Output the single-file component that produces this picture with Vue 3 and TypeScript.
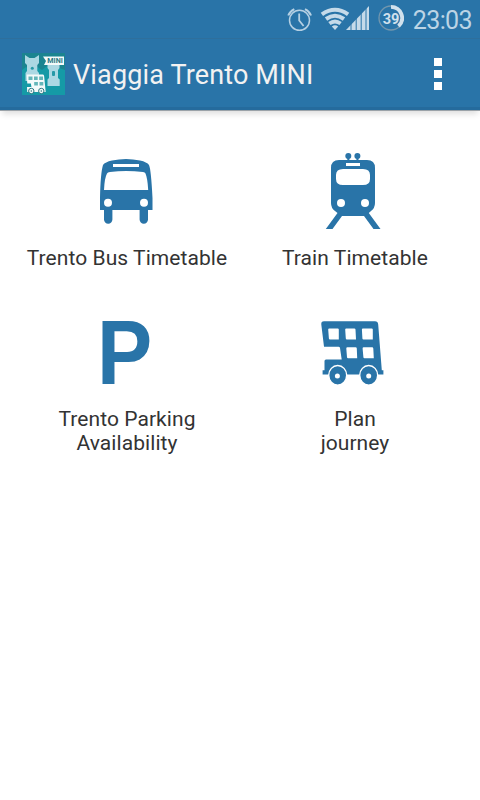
<script setup lang="ts">
interface Tile {
  id: 'bus' | 'train' | 'parking' | 'journey'
  lines: string[]
}

const title = 'Viaggia Trento MINI'
const clock = '23:03'
const battery = 39

const tiles: Tile[] = [
  { id: 'bus', lines: ['Trento Bus Timetable'] },
  { id: 'train', lines: ['Train Timetable'] },
  { id: 'parking', lines: ['Trento Parking', 'Availability'] },
  { id: 'journey', lines: ['Plan', 'journey'] },
]
</script>

<template>
  <div class="screen">
    <div class="status">
      <svg class="status-icons" viewBox="0 0 124 38" aria-hidden="true">
        <!-- alarm -->
        <g fill="none" stroke="#b5d0e3" stroke-width="1.5">
          <circle cx="19.5" cy="20.3" r="10" />
          <path d="M19.2 13.5V20.5L23.6 26" stroke-width="1.8" />
          <path d="M8.3 15.5Q9.8 11.4 14.3 9.2M31 15.5Q29.5 11.4 25 9.2" stroke-width="2" />
        </g>
        <!-- wifi -->
        <g fill="none" stroke="#c5dae9" stroke-width="4">
          <path d="M41.9 14.4Q55 5.2 68.1 14.4" />
          <path d="M46 19Q55 12.6 64 19" />
          <path d="M49.4 23.6Q55 19.4 60.6 23.6" stroke-width="3.8" />
        </g>
        <path d="M51.8 26.4Q55 24.2 58.2 26.4L55 30Z" fill="#c5dae9" />
        <!-- signal -->
        <path d="M66 30L89 6V30Z" fill="#c5dae9" />
        <path d="M71 22V30M76.2 17V30M81.2 12V30M86 7V30" stroke="#2974a8" stroke-width="1" />
        <!-- battery ring -->
        <circle cx="111" cy="18" r="12" fill="none" stroke="#7296ad" stroke-width="1.3" />
        <path d="M111 6.8A11.2 11.2 0 0 1 118.5 26.2" fill="none" stroke="#d0e1ed" stroke-width="3.8" />
        <text class="battery" x="111" y="24" text-anchor="middle">{{ battery }}</text>
      </svg>
      <span class="clock">{{ clock }}</span>
    </div>

    <header class="bar">
      <svg class="logo" viewBox="0 0 43 42" aria-hidden="true">
        <rect width="43" height="42" fill="#1b8490" />
        <path d="M0 17L4 14L8 17L14 13L20 17L25 13L31 18L37 15L43 17V42H0Z" fill="#159aa6" />
        <path d="M3 2L7.5 5H12.5L17 2V10L15.3 12V18L17 20V28H3.5V20L5 18V12L3 10Z" fill="#acd8e3" />
        <circle cx="10.3" cy="15.3" r="1.5" fill="#2799a7" />
        <path d="M25.5 4H37.5V15L36 17V25L37.7 26.5V33H25.5V26.5L27 25V17L25.5 15Z" fill="#acd8e3" />
        <rect x="30" y="18" width="3" height="5" rx="1" fill="#2799a7" />
        <path d="M21 3.5H42V12H22L24 8Z" fill="#f4fafa" />
        <text class="ribbon" x="25.3" y="10.3" textLength="15.5" lengthAdjust="spacingAndGlyphs">MINI</text>
        <path d="M4.6 21.5H21Q22 21.5 22.1 23L23.7 39H5.2L5 34H9.4L8.9 30.5H5.3Z" fill="#f4fafa" />
        <path d="M6.5 23.5H10.5V27H6.5ZM12 23.5H15.7V27H12ZM17.2 23.5H21V27H17.2ZM12.2 29H15.9V32.5H12.2ZM17.5 29H21.3V32.5H17.5Z" fill="#64b6b9" />
        <g fill="#f4fafa" stroke="#2a7882" stroke-width="1">
          <circle cx="9.3" cy="38" r="2.7" />
          <circle cx="19.3" cy="38" r="2.7" />
        </g>
        <circle cx="9.3" cy="38" r=".8" fill="#2a7882" />
        <circle cx="19.3" cy="38" r=".8" fill="#2a7882" />
      </svg>
      <h1 class="title">{{ title }}</h1>
      <button class="menu" type="button" aria-label="Menu">
        <i></i><i></i><i></i>
      </button>
    </header>

    <main class="grid">
      <button v-for="tile in tiles" :key="tile.id" class="tile" :class="tile.id" type="button">
        <svg v-if="tile.id === 'bus'" class="icon" viewBox="0 0 80 90">
          <path fill-rule="evenodd" d="M13 20Q15 17 22 15.5Q36 12.5 50 15.5Q57 17 59 20Q61 24 62.5 53V65H58V74.5A4.2 4.2 0 0 1 49.6 74.5V65H22.4V74.5A4.2 4.2 0 0 1 14 74.5V65H10V53Q10.5 28 13 20ZM23 19V22H49V19ZM17 28.5Q14.5 33 14 45H58.2Q57.5 33 55.5 28.5Q55 27.3 53 27Q36 25 20 27Q17.5 27.3 17 28.5Z" />
          <circle cx="18" cy="57.7" r="4" fill="#fff" />
          <circle cx="54" cy="57.7" r="4" fill="#fff" />
        </svg>
        <svg v-else-if="tile.id === 'train'" class="icon" viewBox="0 0 80 90">
          <circle cx="33.3" cy="11" r="3" />
          <circle cx="42.4" cy="11" r="3" />
          <path d="M32.3 12H34.4V16H32.3ZM41.4 12H43.5V16H41.4Z" />
          <path fill-rule="evenodd" d="M24 15H52Q60 15 60 23V58Q60 63 56 66L53.8 68L65.5 84H58.5L49 71H27L17.5 84H10.8L22.5 68L20 66Q16 63 16 58V23Q16 15 24 15ZM31 18V21H45V18ZM28 24Q21 24 21 30V34Q21 40 28 40H48Q55 40 55 34V30Q55 24 48 24Z" />
          <circle cx="26" cy="58" r="4" fill="#fff" />
          <circle cx="50" cy="58" r="4" fill="#fff" />
        </svg>
        <svg v-else-if="tile.id === 'parking'" class="icon" viewBox="0 0 80 90">
          <text class="parking-letter" transform="translate(7 74) scale(.92 1)">P</text>
        </svg>
        <svg v-else class="icon" viewBox="0 0 80 90">
          <path fill-rule="evenodd" d="M14 11.3H65Q67.9 11.3 68.2 14.5L71.8 60.2H73.4V64.6H12.6V60.2H14.5V51Q14.5 49.5 16 49.5H31.7L30 38Q29.8 36.8 28.5 36.8H14L11.3 14.5Q11 11.3 14 11.3ZM18.2 19.5L18.9 28.4Q19 29.4 20 29.4H28.8V19.5Q28.8 18.4 27.7 18.4H19.2Q18.2 18.4 18.2 19.5ZM35.2 19.5L35.8 28.4Q35.9 29.4 36.9 29.4H46L45.5 19.5Q45.4 18.4 44.3 18.4H36.2Q35.2 18.4 35.2 19.5ZM51.9 19.5L52.4 28.4Q52.5 29.4 53.5 29.4H62.8V19.5Q62.8 18.4 61.7 18.4H52.9Q51.9 18.4 51.9 19.5ZM36.3 38.4L37 47.2Q37.1 48.2 38.1 48.2H47.2L46.8 38.4Q46.7 37.3 45.6 37.3H37.3Q36.3 37.3 36.3 38.4ZM52.6 38.4L53.4 47.2Q53.5 48.2 54.5 48.2H63.8L63.3 38.4Q63.2 37.3 62.1 37.3H53.6Q52.6 37.3 52.6 38.4Z" />
          <g stroke="#fff" stroke-width="1.4">
            <ellipse cx="27.7" cy="65.3" rx="9" ry="9.8" />
            <ellipse cx="58.7" cy="65.3" rx="9" ry="9.8" />
          </g>
          <circle cx="27.4" cy="66" r="2.5" fill="#fff" />
          <circle cx="58.7" cy="66" r="2.5" fill="#fff" />
        </svg>
        <span class="label">
          <span v-for="line in tile.lines" :key="line">{{ line }}</span>
        </span>
      </button>
    </main>
  </div>
</template>

<style>
body {
  background: #fff;
}
</style>

<style scoped>
.screen {
  display: flex;
  flex-direction: column;
  width: 480px;
  height: 800px;
  overflow: hidden;
  background: #fff;
  font-family: Roboto, sans-serif;
}

.status {
  display: flex;
  align-items: center;
  justify-content: flex-end;
  gap: 9px;
  box-sizing: border-box;
  height: 38px;
  padding-right: 8px;
  background: #2974a8;
}

.status-icons {
  width: 124px;
  height: 38px;
}

.battery {
  fill: #d0e1ed;
  font-size: 14.5px;
  font-weight: 700;
}

.clock {
  color: #bcd4e5;
  font-size: 25px;
  line-height: 38px;
  letter-spacing: -0.6px;
  padding-top: 3px;
}

.bar {
  display: flex;
  align-items: center;
  box-sizing: border-box;
  height: 73px;
  flex: none;
  padding: 0 38px 1px 22px;
  border-top: 1px solid #2e6f9c;
  border-bottom: 1px solid #9aa2a8;
  background: linear-gradient(#2974a8 68px, #256b9d 68px);
  box-shadow: 0 5px 6px -2px rgba(0, 0, 0, 0.13);
}

.logo {
  width: 43px;
  height: 42px;
}

.ribbon {
  fill: #2a7882;
  font-size: 7px;
  font-weight: 700;
}

.title {
  margin: 0 auto 0 8px;
  padding-top: 1px;
  color: #f2f2f2;
  font-size: 27px;
  font-weight: 400;
  line-height: 42px;
  letter-spacing: 0.15px;
  white-space: nowrap;
}

.menu {
  display: flex;
  flex-direction: column;
  gap: 4px;
  padding: 0;
  border: 0;
  background: none;
}

.menu i {
  width: 8px;
  height: 8px;
  background: #fff;
}

.grid {
  display: grid;
  grid-template-columns: repeat(2, 228px);
  grid-template-rows: 165px 165px;
  padding: 34px 11px 0 13px;
}

.tile {
  display: flex;
  flex-direction: column;
  align-items: center;
  padding: 0;
  border: 0;
  background: none;
  font: inherit;
  color: #333;
}

.icon {
  width: 80px;
  height: 90px;
  fill: #2974a8;
  overflow: visible;
}

.bus .icon,
.parking .icon {
  margin-left: 6px;
}

.journey .icon {
  margin-left: -10px;
}

.parking-letter {
  font-family: "Liberation Sans", sans-serif;
  font-size: 90px;
  font-weight: 700;
}

.label {
  display: flex;
  flex-direction: column;
  align-items: center;
  margin-top: 11px;
  font-size: 21px;
  line-height: 24px;
  letter-spacing: 0.07px;
  white-space: nowrap;
}

.parking .label,
.journey .label {
  margin-top: 7px;
}
</style>
